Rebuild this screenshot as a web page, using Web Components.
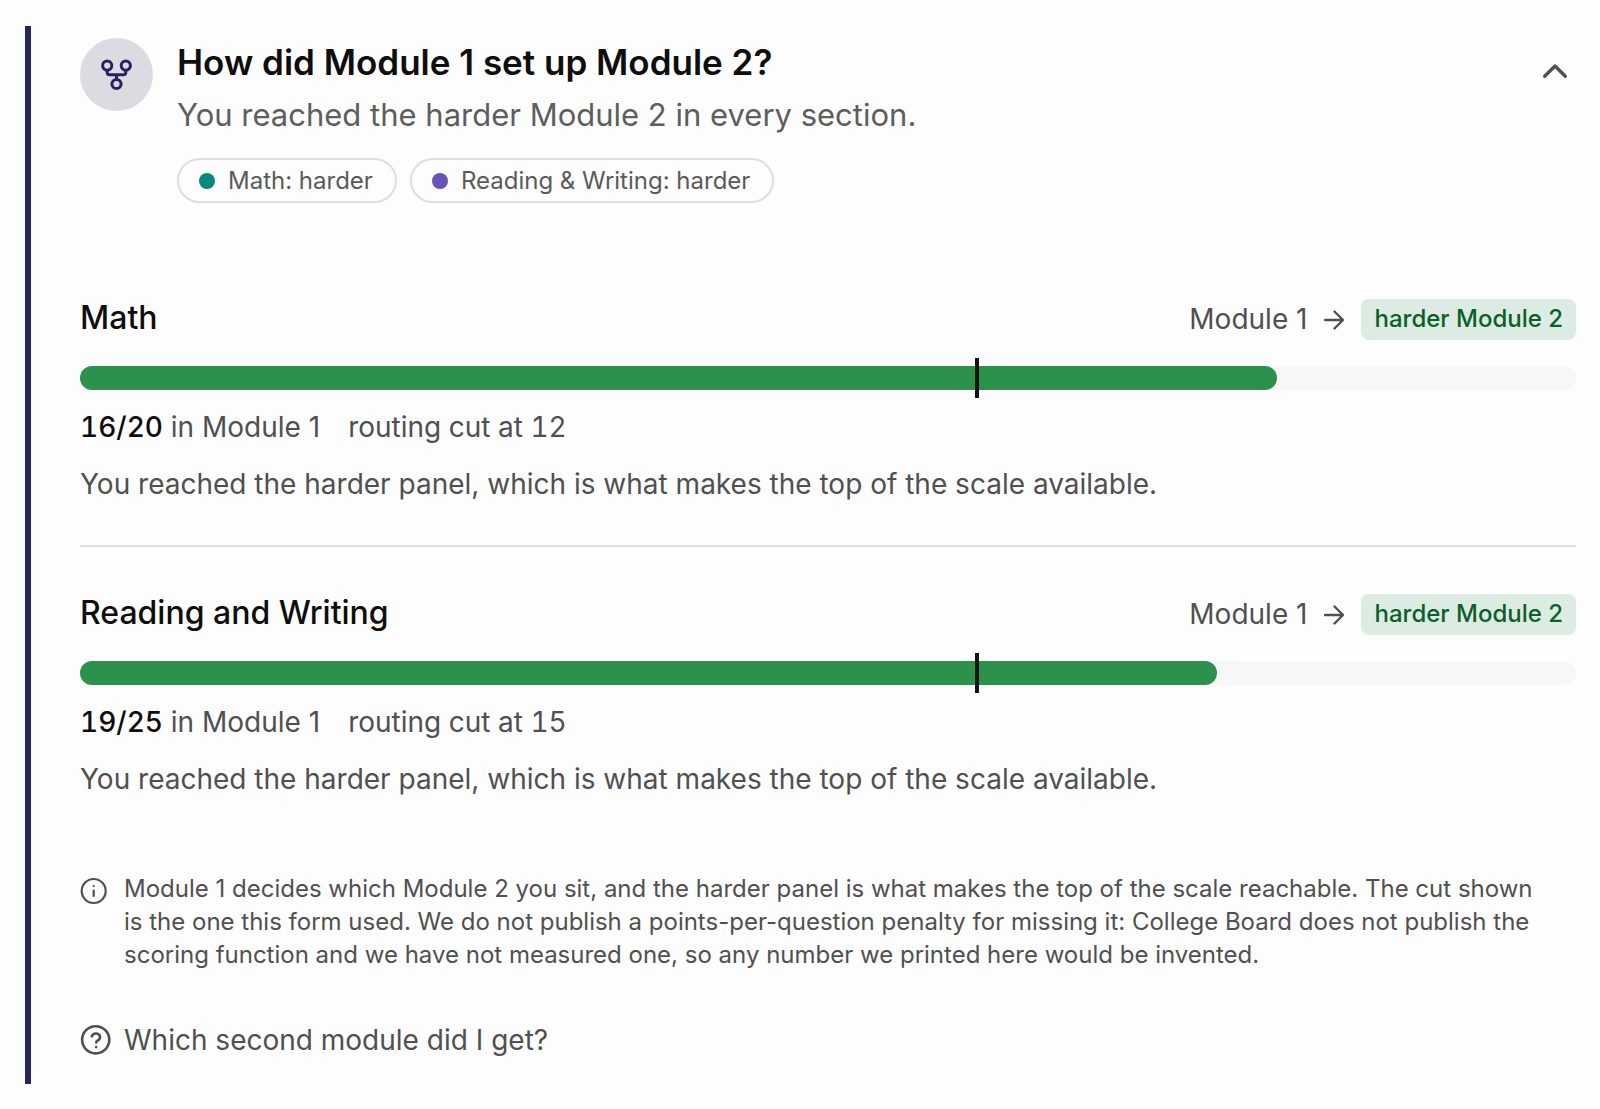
<!DOCTYPE html>
<html lang="en">
<head>
<meta charset="utf-8">
<meta name="viewport" content="width=device-width, initial-scale=1">
<title>Module routing</title>
<style>
  body {
    margin: 0;
    background: #fdfdfd;
    color: #505050;
    font-family: Inter, "Liberation Sans", sans-serif;
    font-size: 28px;
    line-height: 42px;
    --ink: #0e0e0f;
    --brand: #27235f;
    --line: #dedee0;
    --good: #2b914b;
    --good-text: #0c5f2a;
    --good-soft: #ddece2;
  }
</style>
</head>
<body>
<routing-card>
  <span slot="title">How did Module 1 set up Module 2?</span>
  <span slot="summary">You reached the harder Module 2 in every section.</span>
  <status-chip slot="chips" style="--dot:#05897f">Math: harder</status-chip>
  <status-chip slot="chips" style="--dot:#6654b8">Reading &amp; Writing: harder</status-chip>

  <section-result name="Math" score="16" total="20" cut="12">You reached the harder panel, which is what makes the top of the scale available.</section-result>
  <section-result name="Reading and Writing" score="19" total="25" cut="15">You reached the harder panel, which is what makes the top of the scale available.</section-result>

  <info-note slot="note">Module 1 decides which Module 2 you sit, and the harder panel is what makes the top of the scale reachable. The cut shown is the one this form used. We do not publish a points-per-question penalty for missing it: College Board does not publish the scoring function and we have not measured one, so any number we printed here would be invented.</info-note>
  <help-link slot="help">Which second module did I get?</help-link>
</routing-card>

<script>
  const define = (name, html, setup) => customElements.define(name, class extends HTMLElement {
    constructor() {
      super();
      this.attachShadow({ mode: 'open' }).innerHTML = html;
    }
    connectedCallback() { if (setup) setup(this, this.shadowRoot); }
  });

  define('routing-card', `
    <style>
      :host { display: block; padding: 26px 24px 25px 25px; }
      article { border-left: 6px solid var(--brand); padding: 12px 0 24px 49px; }
      h2 { margin: 0; font: inherit; }
      button {
        display: flex; align-items: flex-start; gap: 24px; width: 100%;
        padding: 0; border: 0; background: none; font: inherit; color: inherit;
        text-align: left; cursor: pointer;
      }
      .mark {
        flex: none; display: grid; place-items: center; width: 73px; height: 73px;
        border-radius: 50%; background: #dbdce2; color: var(--brand);
      }
      .copy { flex: 1; display: flex; flex-direction: column; min-width: 0; }
      .title { font-size: 35px; line-height: 48px; font-weight: 600; color: var(--ink); }
      .summary { font-size: 31px; line-height: 50px; margin-top: 4px; color: #5e5e5e; }
      .chips { display: flex; flex-wrap: wrap; gap: 13px; margin-top: 18px; }
      .chevron { flex: none; margin: 13px 0 0; }
      svg { display: block; fill: none; stroke: currentColor; stroke-linecap: round; stroke-linejoin: round; }
      .sections { margin-top: 96px; }
      .note { margin-top: 72px; }
      .help { margin-top: 49px; }
    </style>
    <article>
      <h2><button type="button" aria-expanded="true">
        <span class="mark"><svg width="32" height="32" viewBox="0 0 32 32" stroke-width="3">
          <circle cx="6.2" cy="6.600" r="4.6"/><circle cx="24.8" cy="6.600" r="4.6"/><circle cx="15.5" cy="25" r="4.6"/>
          <path d="M6.2 11.2v2.4q0 2.200 2.200 2.200h14.2q2.200 0 2.200-2.200v-2.4M15.5 15.800v4.700"/></svg></span>
        <span class="copy">
          <span class="title"><slot name="title"></slot></span>
          <span class="summary"><slot name="summary"></slot></span>
          <span class="chips"><slot name="chips"></slot></span>
        </span>
        <svg class="chevron" width="40" height="40" viewBox="0 0 40 40" stroke-width="3.400"><path d="M8.700 25.300 19 15 29.300 25.300"/></svg>
      </button></h2>
      <div class="sections"><slot></slot></div>
      <div class="note"><slot name="note"></slot></div>
      <div class="help"><slot name="help"></slot></div>
    </article>`);

  define('status-chip', `
    <style>
      :host {
        display: inline-flex; align-items: center; gap: 13px; box-sizing: border-box;
        height: 45px; padding: 0 22px 0 20px; border: 2px solid var(--line); border-radius: 23px;
        font-size: 24px; line-height: 33px; color: #5a5a5a;
      }
      i { width: 16px; height: 16px; border-radius: 50%; background: var(--dot); }
    </style>
    <i></i><span><slot></slot></span>`);

  define('section-result', `
    <style>
      :host { display: block; }
      :host(:not(:last-of-type)) { border-bottom: 2px solid var(--line); padding-bottom: 40px; margin-bottom: 47px; }
      header { display: flex; align-items: baseline; justify-content: space-between; gap: 24px; }
      h3 { margin: 0; font-size: 32px; line-height: 36px; font-weight: 500; color: var(--ink); }
      .route { display: flex; align-items: center; gap: 17px; line-height: 38px; }
      .from { padding-bottom: 2px; }
      .route svg { display: block; fill: none; stroke: currentColor; stroke-width: 2.4; stroke-linecap: round; stroke-linejoin: round; }
      .badge {
        padding: 3px 13px 5px; border-radius: 8px; background: var(--good-soft); color: var(--good-text);
        font-size: 24px; line-height: 33px; font-weight: 500;
      }
      .track { position: relative; height: 24px; margin-top: 26px; border-radius: 12px; background: #f7f7f7; }
      .fill { height: 100%; border-radius: 12px; background: var(--good); }
      .cut { position: absolute; top: -8px; bottom: -8px; width: 4px; margin-left: -3px; background: #151515; }
      .stats { display: flex; gap: 28px; margin: 16px 0 0; }
      .stats b { font-weight: 500; color: var(--ink); }
      .num { font-variant-numeric: tabular-nums; }
      .text { margin: 15px 0 0; }
    </style>
    <header>
      <h3></h3>
      <div class="route"><span class="from">Module 1</span>
        <svg width="20" height="20" viewBox="0 0 20 20"><path d="M1 10h18M10.500 1.500 19 10l-8.500 8.500"/></svg>
        <span class="badge">harder Module 2</span></div>
    </header>
    <div class="track"><div class="fill"></div><div class="cut"></div></div>
    <p class="stats"><span><b class="num score"></b> in Module 1</span><span class="num">routing cut at <span class="at"></span></span></p>
    <p class="text"><slot></slot></p>`,
    (el, root) => {
      const [score, total, cut] = ['score', 'total', 'cut'].map(k => Number(el.getAttribute(k)));
      root.querySelector('h3').textContent = el.getAttribute('name');
      root.querySelector('.score').textContent = score + '/' + total;
      root.querySelector('.at').textContent = cut;
      root.querySelector('.fill').style.width = (score / total * 100) + '%';
      root.querySelector('.cut').style.left = (cut / total * 100) + '%';
    });

  define('info-note', `
    <style>
      :host { display: flex; align-items: flex-start; gap: 16px; padding-right: 20px; font-size: 24px; line-height: 33px; }
      svg { flex: none; margin-top: 5px; fill: none; stroke: currentColor; stroke-width: 2.2; stroke-linecap: round; }
      p { margin: 0; flex: 1; }
    </style>
    <svg width="28" height="28" viewBox="0 0 28 28"><circle cx="13.700" cy="14" r="12"/><path d="M13.700 13.500v5.500M13.700 9v.1"/></svg>
    <p><slot></slot></p>`);

  define('help-link', `
    <style>
      :host { display: block; }
      button {
        display: flex; align-items: center; gap: 12px; padding: 0; border: 0; background: none;
        font: inherit; line-height: 40px; color: inherit; cursor: pointer;
      }
      svg { fill: none; stroke: currentColor; stroke-width: 2.6; stroke-linecap: round; stroke-linejoin: round; }
    </style>
    <button type="button">
      <svg width="32" height="32" viewBox="0 0 32 32"><circle cx="15.700" cy="15.800" r="13.600"/><path d="M11.800 12.300a4.300 4.300 0 0 1 8.300 1.200c0 2.600-3.900 3-3.900 5M16.100 23v.1"/></svg>
      <span><slot></slot></span>
    </button>`);
</script>
</body>
</html>
